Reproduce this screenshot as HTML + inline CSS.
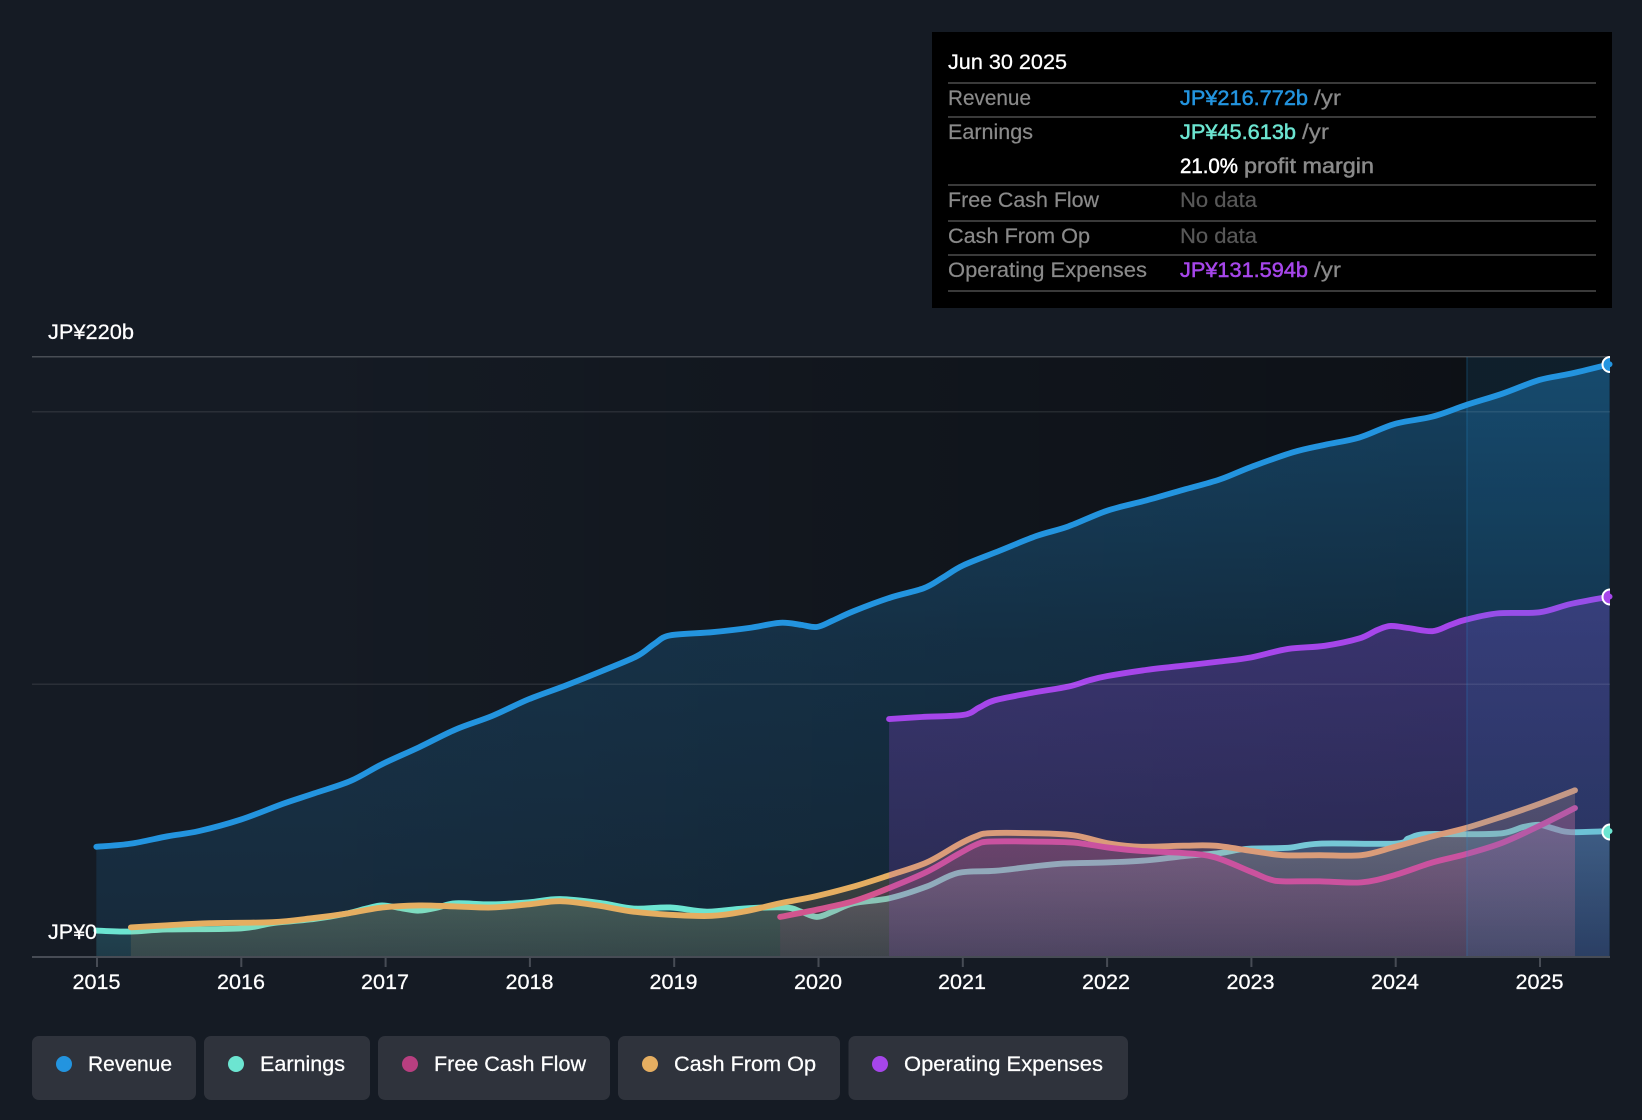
<!DOCTYPE html>
<html><head><meta charset="utf-8"><style>
html,body{margin:0;padding:0;background:#151b24;width:1642px;height:1120px;overflow:hidden}
svg{display:block}
text{font-family:"Liberation Sans",sans-serif;font-size:21px}
.m{stroke-width:.5px}
.t{stroke:#fff;stroke-width:.25px}
</style></head><body>
<svg width="1642" height="1120" viewBox="0 0 1642 1120" xmlns="http://www.w3.org/2000/svg">
<defs>
<linearGradient id="vig" gradientUnits="userSpaceOnUse" x1="300" y1="0" x2="1466" y2="0"><stop offset="0" stop-color="#000" stop-opacity="0"/><stop offset="1" stop-color="#000" stop-opacity=".38"/></linearGradient>
<linearGradient id="fr" gradientUnits="userSpaceOnUse" x1="0" y1="334" x2="0" y2="914"><stop offset="0" stop-color="#2394df" stop-opacity=".38"/><stop offset=".48" stop-color="#2394df" stop-opacity=".2"/><stop offset="1" stop-color="#2394df" stop-opacity=".12"/></linearGradient>
<linearGradient id="fo" gradientUnits="userSpaceOnUse" x1="0" y1="570" x2="0" y2="914"><stop offset="0" stop-color="#a646ea" stop-opacity=".27"/><stop offset="1" stop-color="#a646ea" stop-opacity=".14"/></linearGradient>
<linearGradient id="fe" gradientUnits="userSpaceOnUse" x1="0" y1="790" x2="0" y2="914"><stop offset="0" stop-color="#6ce5d1" stop-opacity=".28"/><stop offset="1" stop-color="#6ce5d1" stop-opacity=".09"/></linearGradient>
<linearGradient id="fc" gradientUnits="userSpaceOnUse" x1="0" y1="760" x2="0" y2="914"><stop offset="0" stop-color="#e5ae61" stop-opacity=".24"/><stop offset="1" stop-color="#e5ae61" stop-opacity=".12"/></linearGradient>
<linearGradient id="ff" gradientUnits="userSpaceOnUse" x1="0" y1="780" x2="0" y2="914"><stop offset="0" stop-color="#c0407f" stop-opacity=".26"/><stop offset="1" stop-color="#c0407f" stop-opacity=".08"/></linearGradient>
<clipPath id="cl"><rect x="0" y="0" width="1610" height="1120"/></clipPath>
</defs>
<rect width="1642" height="1120" fill="#151b24"/>
<!-- chart background -->
<rect x="32" y="357" width="1578" height="600" fill="url(#vig)"/>

<g transform="scale(1.0472,1.0467)" fill="none" stroke-linecap="round" stroke-linejoin="round" stroke-width="5.6">
<path id="fR" stroke="none" fill="url(#fr)"/>
<path id="fE" stroke="none" fill="url(#fe)"/>
<path id="lE" stroke="#6ce5d1"/>
<path id="fC" stroke="none" fill="url(#fc)"/>
<path id="lC" stroke="#e5ae61"/>
<path id="fF" stroke="none" fill="url(#ff)"/>
<path id="lF" stroke="#d2558f"/>
<path id="fO" stroke="none" fill="url(#fo)"/>
<path id="lO" stroke="#a646ea"/>
</g>

<!-- gridlines over fills -->
<rect x="32" y="356" width="1578" height="1.5" fill="#fff" fill-opacity=".22"/>
<rect x="32" y="411" width="1578" height="1.5" fill="#fff" fill-opacity=".09"/>
<rect x="32" y="683.5" width="1578" height="1.5" fill="#fff" fill-opacity=".09"/>

<!-- forecast band -->
<rect x="1466.5" y="357" width="143.5" height="600" fill="#2394df" fill-opacity=".11"/>
<rect x="1466" y="357" width="2" height="600" fill="#2394df" fill-opacity=".14"/>

<g transform="scale(1.0472,1.0467)" fill="none" stroke-linecap="round" stroke-linejoin="round" stroke-width="5.6">
<path id="lR" stroke="#2394df"/>
</g>

<!-- axis -->
<rect x="32" y="956" width="1578" height="2" fill="#474c55"/>
<g fill="#474c55">
<rect x="96" y="958" width="2" height="9"/><rect x="240.3" y="958" width="2" height="9"/><rect x="384.6" y="958" width="2" height="9"/><rect x="528.9" y="958" width="2" height="9"/><rect x="673.2" y="958" width="2" height="9"/><rect x="817.5" y="958" width="2" height="9"/><rect x="961.8" y="958" width="2" height="9"/><rect x="1106.1" y="958" width="2" height="9"/><rect x="1250.4" y="958" width="2" height="9"/><rect x="1394.7" y="958" width="2" height="9"/><rect x="1539" y="958" width="2" height="9"/>
</g>

<!-- end dots -->
<g clip-path="url(#cl)" stroke="#fff" stroke-width="2">
<circle cx="1610" cy="364.5" r="7.5" fill="#2394df"/>
<circle cx="1610" cy="597" r="7.5" fill="#a646ea"/>
<circle cx="1610" cy="832" r="7.5" fill="#6ce5d1"/>
</g>

<!-- axis labels -->
<g fill="#fff" class="t">
<text x="48" y="339" textLength="86" lengthAdjust="spacingAndGlyphs">JP¥220b</text>
<text x="48" y="939" textLength="49" lengthAdjust="spacingAndGlyphs">JP¥0</text>
<g>
<text x="72.5" y="989" textLength="48" lengthAdjust="spacingAndGlyphs">2015</text><text x="217" y="989" textLength="48" lengthAdjust="spacingAndGlyphs">2016</text><text x="361" y="989" textLength="48" lengthAdjust="spacingAndGlyphs">2017</text><text x="505.5" y="989" textLength="48" lengthAdjust="spacingAndGlyphs">2018</text><text x="649.5" y="989" textLength="48" lengthAdjust="spacingAndGlyphs">2019</text><text x="794" y="989" textLength="48" lengthAdjust="spacingAndGlyphs">2020</text><text x="938" y="989" textLength="48" lengthAdjust="spacingAndGlyphs">2021</text><text x="1082" y="989" textLength="48" lengthAdjust="spacingAndGlyphs">2022</text><text x="1226.5" y="989" textLength="48" lengthAdjust="spacingAndGlyphs">2023</text><text x="1371" y="989" textLength="48" lengthAdjust="spacingAndGlyphs">2024</text><text x="1515.5" y="989" textLength="48" lengthAdjust="spacingAndGlyphs">2025</text>
</g>
</g>

<!-- tooltip -->
<rect x="932" y="32" width="680" height="276" fill="#000"/>
<g fill="#3a3a3a">
<rect x="948" y="82" width="648" height="2"/><rect x="948" y="116" width="648" height="2"/><rect x="948" y="184" width="648" height="2"/><rect x="948" y="220" width="648" height="2"/><rect x="948" y="254" width="648" height="2"/><rect x="948" y="290" width="648" height="2"/>
</g>
<text x="948" y="69" fill="#fff" class="t" textLength="119" lengthAdjust="spacingAndGlyphs">Jun 30 2025</text>
<g fill="#8a8a8a" stroke="#8a8a8a" stroke-width=".2">
<text x="948" y="105" textLength="83" lengthAdjust="spacingAndGlyphs">Revenue</text>
<text x="948" y="139" textLength="85" lengthAdjust="spacingAndGlyphs">Earnings</text>
<text x="948" y="207" textLength="151" lengthAdjust="spacingAndGlyphs">Free Cash Flow</text>
<text x="948" y="243" textLength="142" lengthAdjust="spacingAndGlyphs">Cash From Op</text>
<text x="948" y="277" textLength="199" lengthAdjust="spacingAndGlyphs">Operating Expenses</text>
<text x="1314" y="105" textLength="27" lengthAdjust="spacingAndGlyphs">/yr</text>
<text x="1302" y="139" textLength="27" lengthAdjust="spacingAndGlyphs">/yr</text>
<text x="1244" y="173" textLength="130" lengthAdjust="spacingAndGlyphs" class="m">profit margin</text>
<text x="1314" y="277" textLength="27" lengthAdjust="spacingAndGlyphs">/yr</text>
</g>
<text x="1180" y="105" class="m" fill="#2394df" stroke="#2394df" textLength="128" lengthAdjust="spacingAndGlyphs">JP¥216.772b</text>
<text x="1180" y="139" class="m" fill="#6ce5d1" stroke="#6ce5d1" textLength="116" lengthAdjust="spacingAndGlyphs">JP¥45.613b</text>
<text x="1180" y="173" class="m" fill="#fff" stroke="#fff" textLength="58" lengthAdjust="spacingAndGlyphs">21.0%</text>
<text x="1180" y="207" fill="#585858" stroke="#585858" stroke-width=".2" textLength="77" lengthAdjust="spacingAndGlyphs">No data</text>
<text x="1180" y="243" fill="#585858" stroke="#585858" stroke-width=".2" textLength="77" lengthAdjust="spacingAndGlyphs">No data</text>
<text x="1180" y="277" class="m" fill="#a646ea" stroke="#a646ea" textLength="128" lengthAdjust="spacingAndGlyphs">JP¥131.594b</text>

<!-- legend -->
<g fill="#2f333c">
<rect x="32" y="1036" width="164" height="64" rx="7"/>
<rect x="204" y="1036" width="166" height="64" rx="7"/>
<rect x="378" y="1036" width="232" height="64" rx="7"/>
<rect x="618" y="1036" width="222" height="64" rx="7"/>
<rect x="848.5" y="1036" width="279.5" height="64" rx="7"/>
</g>
<circle cx="64" cy="1064" r="8" fill="#2394df"/>
<circle cx="236" cy="1064" r="8" fill="#6ce5d1"/>
<circle cx="410" cy="1064" r="8" fill="#b83f80"/>
<circle cx="650" cy="1064" r="8" fill="#e5ae61"/>
<circle cx="880" cy="1064" r="8" fill="#a646ea"/>
<g fill="#fff" class="t">
<text x="88" y="1071" textLength="84" lengthAdjust="spacingAndGlyphs">Revenue</text>
<text x="260" y="1071" textLength="85" lengthAdjust="spacingAndGlyphs">Earnings</text>
<text x="434" y="1071" textLength="152" lengthAdjust="spacingAndGlyphs">Free Cash Flow</text>
<text x="674" y="1071" textLength="142" lengthAdjust="spacingAndGlyphs">Cash From Op</text>
<text x="904" y="1071" textLength="199" lengthAdjust="spacingAndGlyphs">Operating Expenses</text>
</g>
</svg>
<script>
var S={
R:"92,809 125,806 160,799 190,794 230,783 270,768 300,758 335,746 365,730 400,714 435,697 470,684 505,668 540,655 575,641 608,627 625,615 640,607 680,604 715,600 745,595 765,597 780,599 795,593 815,584 850,571 882,562 900,552 920,540 955,526 990,512 1020,503 1057,488 1095,478 1130,468 1165,458 1195,446 1235,432 1265,425 1298,418 1332,405 1368,398 1400,387 1435,376 1470,363 1500,357 1537,348",
O:"849,687 880,685 920,683 935,676 950,669 985,662 1020,656 1040,650 1057,646 1095,640 1130,636 1165,632 1195,628 1230,620 1265,617 1298,610 1315,602 1328,598 1345,600 1368,603 1385,597 1400,592 1430,586 1470,585 1500,577 1537,570",
E:"92,889 125,890 160,888 230,887 260,882 300,878 330,873 350,868 365,865 385,868 400,870 418,867 435,863 470,864 505,862 535,859 575,863 605,868 640,867 675,871 710,868 750,867 765,871 780,876 795,871 815,863 850,858 885,847 915,834 950,832 985,828 1015,825 1057,824 1095,822 1130,818 1165,815 1190,811 1230,810 1260,806 1332,806 1345,801 1360,797 1400,797 1435,796 1455,790 1470,788 1485,792 1500,795 1537,794",
C:"125,886 160,884 200,882 260,881 300,877 330,873 365,867 400,865 435,866 470,867 505,864 535,861 570,865 605,871 640,874 680,875 710,871 745,863 780,856 815,847 850,836 885,824 915,807 932,799 945,796 985,796 1025,798 1060,806 1090,809 1130,808 1160,808 1195,813 1225,817 1260,817 1300,817 1332,809 1368,799 1400,791 1435,780 1470,768 1504,755",
F:"745,876 780,869 815,861 850,848 885,833 915,816 932,807 945,804 985,804 1025,805 1060,810 1090,813 1130,815 1160,819 1195,833 1212,840 1225,842 1260,842 1300,843 1332,836 1368,824 1400,816 1435,805 1470,789 1504,772"
};
for(var k in S){
var p=S[k].split(" ").map(function(s){return s.split(",").map(Number)});
var d="M"+p[0][0]+" "+p[0][1];
for(var i=0;i<p.length-1;i++){
var a=p[Math.max(i-1,0)],b=p[i],c=p[i+1],e=p[Math.min(i+2,p.length-1)];
d+=" C"+(b[0]+(c[0]-a[0])/6).toFixed(1)+" "+(b[1]+(c[1]-a[1])/6).toFixed(1)+" "+(c[0]-(e[0]-b[0])/6).toFixed(1)+" "+(c[1]-(e[1]-b[1])/6).toFixed(1)+" "+c[0]+" "+c[1];
}
document.getElementById("l"+k).setAttribute("d",d);
document.getElementById("f"+k).setAttribute("d",d+" L"+p[p.length-1][0]+" 914 L"+p[0][0]+" 914 Z");
}
</script>
</body></html>
